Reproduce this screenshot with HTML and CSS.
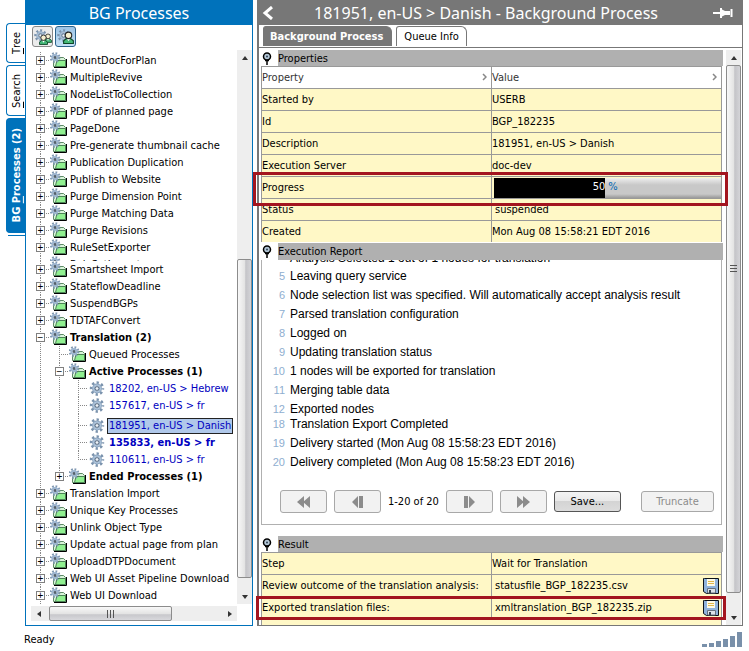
FILE: index.html
```html
<!DOCTYPE html>
<html lang="en">
<head>
    <meta charset="UTF-8">
    <meta name="viewport" content="width=device-width, initial-scale=1.0">
    <title>BG Processes</title>
    <link rel="stylesheet" href="styles.css">
</head>
<body>

    <!-- Icon sprite -->
    <svg class="sprite" aria-hidden="true">
        <symbol id="gear" viewBox="0 0 16 16">
            <circle cx="8" cy="8" r="6.2" fill="none" stroke="#7b93ad" stroke-width="3" stroke-dasharray="2.43 2.44" stroke-dashoffset="1.2"/>
            <circle cx="8" cy="8" r="3.8" fill="none" stroke="#8da6c0" stroke-width="3"/>
            <circle cx="8" cy="8" r="3.8" fill="none" stroke="#b9cde2" stroke-width="1"/>
            <circle cx="8" cy="8" r="2" fill="#eef3f8" stroke="#56697e" stroke-width="1"/>
        </symbol>
        <symbol id="folder" viewBox="0 0 17 17">
            <path d="M4 15.500H16.500V7" fill="none" stroke="#000" stroke-width="1"/>
            <path d="M3.500 14.500V7.500L9.500 5.500H13.500L15.500 7.500V14.500Z" fill="#d9f5d9" stroke="#5e8a66"/>
            <path d="M7 8.500H15.500V14.500H5.500Z" fill="#90f090" stroke="#4d8257"/>
            <circle cx="5" cy="5.500" r="4.200" fill="none" stroke="#8098b2" stroke-width="2.400" stroke-dasharray="1.65 1.65"/>
            <circle cx="5" cy="5.500" r="2.600" fill="none" stroke="#9db5d0" stroke-width="2"/>
            <circle cx="5" cy="5.500" r="1.400" fill="#52606e"/>
        </symbol>
        <symbol id="pin" viewBox="0 0 10 13">
            <circle cx="5" cy="4.500" r="3.500" fill="#b5c8d8" stroke="#000" stroke-width="1.500"/>
            <circle cx="5" cy="4.500" r="1" fill="#345"/>
            <path d="M5 8V13M3 8.500H7" stroke="#000" stroke-width="1.500"/>
        </symbol>
        <symbol id="disk" viewBox="0 0 16 16">
            <path d="M1.500 0.500H15.500V15.500H3.500L0.500 13.500V0.500Z" fill="#8fb3dc" stroke="#0c1218"/>
            <path d="M4 1H12V8H4Z" fill="#fdfbe8"/>
            <path d="M5 3.500H11M5 5.500H11" stroke="#e0b84c"/>
            <path d="M4.500 10.500H12.500V15H4.500Z" fill="#dde3e8" stroke="#66727e"/>
            <path d="M6 12H8V15H6Z" fill="#35424f"/>
        </symbol>
        <symbol id="person" viewBox="0 0 10 12">
            <path d="M0.500 11.500V9L3 7H7L9.500 9V11.500Z" fill="#45b878" stroke="#0c4526"/>
            <path d="M3.500 7L5 9.500L6.500 7Z" fill="#fff"/>
            <circle cx="5" cy="4" r="3" fill="#f6efcf" stroke="#222"/>
        </symbol>
    </svg>

    <div class="app">
        <div class="workspace">

            <nav class="side-tabs">
                <button class="side-tab"><span><u>T</u>ree</span></button>
                <button class="side-tab side-tab-search"><span><u>S</u>earch</span></button>
                <button class="side-tab side-tab-active"><span>BG <u>P</u>rocesses (2)</span></button>
                <div class="side-tabs-end"></div>
            </nav>

            <!-- Process tree -->
            <aside class="tree-panel">
                <h1 class="panel-title">BG Processes</h1>
                <div class="toolbar">
                    <button class="tool" aria-label="All users">
                        <svg width="18" height="18" viewBox="0 0 18 18"><use href="#gear" x="0" y="1" width="13" height="13"/><use href="#person" x="10" y="5" width="8" height="10"/><use href="#person" x="5" y="6" width="9" height="11"/></svg>
                    </button>
                    <button class="tool tool-on" aria-label="Current user">
                        <svg width="18" height="18" viewBox="0 0 18 18"><use href="#gear" x="0" y="1" width="13" height="13"/><use href="#person" x="6" y="3" width="11" height="13"/></svg>
                    </button>
                </div>

                <div class="tree-view">
                    <div class="tree-main">
                        <ul class="tree">
                            <li><div class="row"><button class="expander">+</button><svg class="icon"><use href="#folder"/></svg><span class="label">MountDocForPlan</span></div></li>
                            <li><div class="row"><button class="expander">+</button><svg class="icon"><use href="#folder"/></svg><span class="label">MultipleRevive</span></div></li>
                            <li><div class="row"><button class="expander">+</button><svg class="icon"><use href="#folder"/></svg><span class="label">NodeListToCollection</span></div></li>
                            <li><div class="row"><button class="expander">+</button><svg class="icon"><use href="#folder"/></svg><span class="label">PDF of planned page</span></div></li>
                            <li><div class="row"><button class="expander">+</button><svg class="icon"><use href="#folder"/></svg><span class="label">PageDone</span></div></li>
                            <li><div class="row"><button class="expander">+</button><svg class="icon"><use href="#folder"/></svg><span class="label">Pre-generate thumbnail cache</span></div></li>
                            <li><div class="row"><button class="expander">+</button><svg class="icon"><use href="#folder"/></svg><span class="label">Publication Duplication</span></div></li>
                            <li><div class="row"><button class="expander">+</button><svg class="icon"><use href="#folder"/></svg><span class="label">Publish to Website</span></div></li>
                            <li><div class="row"><button class="expander">+</button><svg class="icon"><use href="#folder"/></svg><span class="label">Purge Dimension Point</span></div></li>
                            <li><div class="row"><button class="expander">+</button><svg class="icon"><use href="#folder"/></svg><span class="label">Purge Matching Data</span></div></li>
                            <li><div class="row"><button class="expander">+</button><svg class="icon"><use href="#folder"/></svg><span class="label">Purge Revisions</span></div></li>
                            <li><div class="row"><button class="expander">+</button><svg class="icon"><use href="#folder"/></svg><span class="label">RuleSetExporter</span></div></li>
                            <li class="clipped"><div class="row"><span class="expander-space"></span><svg class="icon"><use href="#folder"/></svg><span class="label">RuleSetImporter</span></div></li>
                            <li><div class="row"><button class="expander">+</button><svg class="icon"><use href="#folder"/></svg><span class="label">Smartsheet Import</span></div></li>
                            <li><div class="row"><button class="expander">+</button><svg class="icon"><use href="#folder"/></svg><span class="label">StateflowDeadline</span></div></li>
                            <li><div class="row"><button class="expander">+</button><svg class="icon"><use href="#folder"/></svg><span class="label">SuspendBGPs</span></div></li>
                            <li><div class="row"><button class="expander">+</button><svg class="icon"><use href="#folder"/></svg><span class="label">TDTAFConvert</span></div></li>
                            <li>
                                <div class="row"><button class="expander">−</button><svg class="icon"><use href="#folder"/></svg><b class="label">Translation (2)</b></div>
                                <ul>
                                    <li><div class="row"><span class="expander-space"></span><svg class="icon"><use href="#folder"/></svg><span class="label">Queued Processes</span></div></li>
                                    <li>
                                        <div class="row"><button class="expander">−</button><svg class="icon"><use href="#folder"/></svg><b class="label">Active Processes (1)</b></div>
                                        <ul class="jobs">
                                            <li><div class="row"><span class="expander-space"></span><svg class="icon"><use href="#gear"/></svg><a class="label" href="#">18202, en-US &gt; Hebrew</a></div></li>
                                            <li><div class="row"><span class="expander-space"></span><svg class="icon"><use href="#gear"/></svg><a class="label" href="#">157617, en-US &gt; fr</a></div></li>
                                            <li class="selected"><div class="row"><span class="expander-space"></span><svg class="icon"><use href="#gear"/></svg><a class="label" href="#">181951, en-US &gt; Danish</a></div></li>
                                            <li><div class="row"><span class="expander-space"></span><svg class="icon"><use href="#gear"/></svg><a class="label" href="#"><b>135833, en-US &gt; fr</b></a></div></li>
                                            <li><div class="row"><span class="expander-space"></span><svg class="icon"><use href="#gear"/></svg><a class="label" href="#">110611, en-US &gt; fr</a></div></li>
                                        </ul>
                                    </li>
                                    <li><div class="row"><button class="expander">+</button><svg class="icon"><use href="#folder"/></svg><b class="label">Ended Processes (1)</b></div></li>
                                </ul>
                            </li>
                            <li><div class="row"><button class="expander">+</button><svg class="icon"><use href="#folder"/></svg><span class="label">Translation Import</span></div></li>
                            <li><div class="row"><button class="expander">+</button><svg class="icon"><use href="#folder"/></svg><span class="label">Unique Key Processes</span></div></li>
                            <li><div class="row"><button class="expander">+</button><svg class="icon"><use href="#folder"/></svg><span class="label">Unlink Object Type</span></div></li>
                            <li><div class="row"><button class="expander">+</button><svg class="icon"><use href="#folder"/></svg><span class="label">Update actual page from plan</span></div></li>
                            <li><div class="row"><button class="expander">+</button><svg class="icon"><use href="#folder"/></svg><span class="label">UploadDTPDocument</span></div></li>
                            <li><div class="row"><button class="expander">+</button><svg class="icon"><use href="#folder"/></svg><span class="label">Web UI Asset Pipeline Download</span></div></li>
                            <li><div class="row"><button class="expander">+</button><svg class="icon"><use href="#folder"/></svg><span class="label">Web UI Download</span></div></li>
                        </ul>
                        <div class="scroll-x">
                            <button class="arrow" aria-label="Scroll left"><svg width="4" height="6"><path d="M4 0V6L0 3Z" fill="#333"/></svg></button>
                            <div class="thumb"></div>
                            <div class="track"></div>
                            <button class="arrow" aria-label="Scroll right"><svg width="4" height="6"><path d="M0 0V6L4 3Z" fill="#333"/></svg></button>
                        </div>
                    </div>
                    <div class="scroll-y">
                        <button class="arrow" aria-label="Scroll up"><svg width="6" height="4"><path d="M0 4H6L3 0Z" fill="#333"/></svg></button>
                        <div class="track track-top"></div>
                        <div class="thumb thumb-tree"></div>
                        <div class="track track-bottom"></div>
                        <button class="arrow" aria-label="Scroll down"><svg width="6" height="4"><path d="M0 0H6L3 4Z" fill="#333"/></svg></button>
                    </div>
                </div>
            </aside>

            <!-- Process details -->
            <main class="detail-panel">
                <header class="detail-title">
                    <button aria-label="Back"><svg width="11" height="14"><path d="M10 1L3 7L10 13" fill="none" stroke="#fff" stroke-width="3"/></svg></button>
                    <h2>181951, en-US &gt; Danish - Background Process</h2>
                    <button aria-label="Pin"><svg width="20" height="12"><path d="M0 6H7M8 1V11M18.500 2V10" stroke="#fff" stroke-width="2"/><path d="M8 2L12 4V8L8 10Z" fill="#fff"/><path d="M11 4H17V8H11Z" fill="#fff"/></svg></button>
                </header>
                <div class="tabs">
                    <button class="tab tab-active">Background Process</button>
                    <button class="tab">Queue Info</button>
                </div>

                <div class="detail-view">
                    <div class="detail-main">
                        <h3 class="section-title"><svg><use href="#pin"/></svg><span>Properties</span></h3>
                        <table class="grid">
                            <thead>
                                <tr>
                                    <th><span>Property</span><svg width="5" height="8"><path d="M1 1L4 4L1 7" fill="none" stroke="#888" stroke-width="1.500"/></svg></th>
                                    <th><span>Value</span><svg width="5" height="8"><path d="M1 1L4 4L1 7" fill="none" stroke="#888" stroke-width="1.500"/></svg></th>
                                </tr>
                            </thead>
                            <tbody>
                                <tr><td>Started by</td><td>USERB</td></tr>
                                <tr><td>Id</td><td>BGP_182235</td></tr>
                                <tr><td>Description</td><td>181951, en-US &gt; Danish</td></tr>
                                <tr><td>Execution Server</td><td>doc-dev</td></tr>
                                <tr>
                                    <td class="highlight highlight-progress">Progress</td>
                                    <td>
                                        <div class="progress" role="progressbar" aria-valuenow="50" aria-label="Progress">
                                            <div class="progress-fill" style="width: 49%">50</div>
                                            <span>%</span>
                                        </div>
                                    </td>
                                </tr>
                                <tr><td>Status</td><td class="inset">suspended</td></tr>
                                <tr><td>Created</td><td>Mon Aug 08 15:58:21 EDT 2016</td></tr>
                            </tbody>
                        </table>

                        <h3 class="section-title section-report"><svg><use href="#pin"/></svg><span>Execution Report</span></h3>
                        <section class="report">
                            <ol>
                                <li class="cut-top"><span></span>Analysis Selected 1 out of 1 nodes for translation</li>
                                <li><span>5</span>Leaving query service</li>
                                <li><span>6</span>Node selection list was specified. Will automatically accept analysis result</li>
                                <li><span>7</span>Parsed translation configuration</li>
                                <li><span>8</span>Logged on</li>
                                <li><span>9</span>Updating translation status</li>
                                <li><span>10</span>1 nodes will be exported for translation</li>
                                <li><span>11</span>Merging table data</li>
                                <li><span>12</span>Exported nodes</li>
                                <li class="tight"><span>18</span>Translation Export Completed</li>
                                <li><span>19</span>Delivery started (Mon Aug 08 15:58:23 EDT 2016)</li>
                                <li><span>20</span>Delivery completed (Mon Aug 08 15:58:23 EDT 2016)</li>
                            </ol>
                            <div class="pager">
                                <button class="btn" disabled aria-label="First page"><svg width="14" height="12"><path d="M7 0V12L0 6ZM13 0V12L6 6Z"/></svg></button>
                                <button class="btn" disabled aria-label="Previous page"><svg width="14" height="12"><path d="M7 0V12L1 6ZM8 0H12V12H8Z"/></svg></button>
                                <span>1-20 of 20</span>
                                <button class="btn" disabled aria-label="Next page"><svg width="14" height="12"><path d="M2 0H6V12H2ZM7 0V12L13 6Z"/></svg></button>
                                <button class="btn" disabled aria-label="Last page"><svg width="14" height="12"><path d="M1 0V12L8 6ZM7 0V12L14 6Z"/></svg></button>
                                <button class="btn btn-save">Save...</button>
                                <button class="btn btn-truncate" disabled>Truncate</button>
                            </div>
                        </section>

                        <h3 class="section-title section-result"><svg><use href="#pin"/></svg><span>Result</span></h3>
                        <table class="grid">
                            <tbody>
                                <tr><td>Step</td><td>Wait for Translation</td></tr>
                                <tr><td>Review outcome of the translation analysis:</td><td class="inset"><div class="file"><span>statusfile_BGP_182235.csv</span><button aria-label="Save status file"><svg><use href="#disk"/></svg></button></div></td></tr>
                                <tr><td class="highlight highlight-files">Exported translation files:</td><td class="inset"><div class="file"><span>xmltranslation_BGP_182235.zip</span><button aria-label="Save translation files"><svg><use href="#disk"/></svg></button></div></td></tr>
                            </tbody>
                        </table>
                        <div class="grid-rest"></div>
                    </div>
                    <div class="scroll-y">
                        <button class="arrow" aria-label="Scroll up"><svg width="6" height="4"><path d="M0 4H6L3 0Z" fill="#333"/></svg></button>
                        <div class="thumb thumb-detail"></div>
                        <div class="track track-detail"></div>
                        <button class="arrow" aria-label="Scroll down"><svg width="6" height="4"><path d="M0 0H6L3 4Z" fill="#333"/></svg></button>
                    </div>
                </div>
            </main>
        </div>

        <footer class="status-bar">
            <span>Ready</span>
            <svg width="41" height="15"><path d="M0 12H5V15H0ZM7 11H12V15H7ZM14 9H19V15H14ZM21 7H26V15H21ZM28 4H33V15H28ZM35 0H40V15H35Z" fill="#7990aa"/></svg>
        </footer>
    </div>

</body>
</html>
```
FILE: styles.css
```css
/* --- Global Styles & Theme --- */
:root {
    --blue: #0072bb;
    --gray: #777777;
    --section: #b0b0b0;
    --line: #999999;
    --cell: #fff8c6;
    --red: #a3151f;
    --link: #0000c0;
}

* {
    box-sizing: border-box;
    margin: 0;
    padding: 0;
}

body {
    font-family: "DejaVu Sans Condensed", "Noto Sans", sans-serif;
    font-size: 11px;
    line-height: 17px;
    color: #000;
    background: #fff;
}

button {
    font: inherit;
    color: inherit;
    background: none;
    border: none;
}

ul,
ol {
    list-style: none;
}

svg {
    display: block;
    flex: none;
}

.sprite {
    position: absolute;
    width: 0;
    height: 0;
}

.app {
    display: flex;
    flex-direction: column;
    min-height: 100vh;
    padding: 0 6px;
}

.workspace {
    display: flex;
}

/* --- Side Tabs --- */
.side-tabs {
    display: flex;
    flex-direction: column;
    gap: 2px;
    width: 19px;
    padding-top: 23px;
}

.side-tab {
    display: flex;
    align-items: center;
    justify-content: center;
    height: 40px;
    border: 1px solid var(--blue);
    border-right: none;
    border-radius: 4px 0 0 4px;
}

.side-tab span {
    writing-mode: vertical-rl;
    transform: rotate(180deg);
    white-space: nowrap;
}

.side-tab-search {
    height: 51px;
}

.side-tab-active {
    height: 115px;
    color: #fff;
    font-weight: bold;
    background: var(--blue);
}

.side-tabs-end {
    height: 1px;
    margin-left: 2px;
    background: var(--blue);
}

/* --- Tree Panel --- */
.tree-panel {
    display: flex;
    flex-direction: column;
    flex: none;
    width: 228px;
    margin-right: 4px;
    border: 1px solid var(--blue);
    border-top: none;
}

.panel-title,
.detail-title h2 {
    font-family: "Noto Sans", sans-serif;
    font-size: 16px;
    font-weight: normal;
    line-height: 26px;
    text-align: center;
    white-space: nowrap;
}

.panel-title {
    height: 25px;
    color: #fff;
    background: var(--blue);
}

.toolbar {
    display: flex;
    gap: 2px;
    height: 25px;
    padding: 1px 6px;
}

.tool {
    display: flex;
    align-items: center;
    justify-content: center;
    width: 21px;
    height: 21px;
    border: 1px solid #888;
    border-radius: 3px;
    background: #ececec;
}

.tool-on {
    border-color: #2c628b;
    background: linear-gradient(#9cc4e6, #c4e0f6);
}

.tree-view {
    display: flex;
    flex: 1;
    padding-bottom: 4px;
}

.tree-main {
    display: flex;
    flex-direction: column;
    flex: 1;
    padding-left: 5px;
}

.tree {
    padding-top: 2px;
    flex: 1;
}

.tree ul {
    padding-left: 19px;
}

.tree li {
    background: repeating-linear-gradient(#888 0 1px, transparent 1px 2px) 9px 0 / 1px 100% no-repeat;
}

.tree ul > li:last-child {
    background-size: 1px 9px;
}

.tree .clipped {
    height: 5px;
    overflow: hidden;
}

.row {
    display: flex;
    align-items: center;
    height: 17px;
    white-space: nowrap;
    background: repeating-linear-gradient(to right, #888 0 1px, transparent 1px 2px) 9px 8px / 10px 1px no-repeat;
}

.expander {
    display: flex;
    align-items: center;
    justify-content: center;
    width: 9px;
    height: 9px;
    margin: 0 5px;
    border: 1px solid #808080;
    font-family: "Liberation Sans", sans-serif;
    font-size: 10px;
    line-height: 7px;
    background: #fff;
}

.expander-space {
    width: 19px;
}

.icon {
    width: 17px;
    height: 17px;
}

.label {
    padding: 0 1px 0 3px;
    color: #000;
    text-decoration: none;
}

.jobs .icon {
    width: 18px;
    height: 15px;
}

.jobs .label {
    margin-left: 1px;
    border: 1px solid transparent;
    padding: 0 1px;
    line-height: 14px;
    color: var(--link);
}

.jobs .selected {
    padding-top: 3px;
}

.jobs .selected .label {
    border-color: #222;
    background: #b0c8ea;
}

/* --- Scrollbars --- */
.scroll-y {
    display: flex;
    flex-direction: column;
    flex: none;
    width: 15px;
    background: #eee;
}

.tree-view .scroll-y {
    margin-bottom: 17px;
}

.scroll-x {
    display: flex;
    height: 15px;
    margin-top: 1px;
    background: #eee;
}

.arrow {
    display: flex;
    align-items: center;
    justify-content: center;
    flex: none;
    width: 15px;
    height: 15px;
}

.thumb {
    display: flex;
    align-items: center;
    justify-content: center;
    border: 1px solid #8c8c8c;
    border-radius: 2px;
    background: linear-gradient(to right, #f8f8f8, #e4e4e4 50%, #c4c4c8 60%, #d4d4d8);
}

.thumb::after {
    content: "";
    width: 7px;
    height: 8px;
    background: repeating-linear-gradient(#555 0 1px, transparent 1px 3px);
}

.scroll-x .thumb {
    flex: 122;
    margin-left: 3px;
    background: linear-gradient(#f8f8f8, #e4e4e4 50%, #c8c8cc 60%, #d8d8dc);
}

.scroll-x .thumb::after {
    background: repeating-linear-gradient(to right, #555 0 1px, transparent 1px 3px);
}

.scroll-x .track {
    flex: 50;
}

.track-top {
    flex: 194;
}

.thumb-tree {
    flex: 317;
}

.thumb-tree::after {
    content: none;
}

.track-bottom {
    flex: 11;
}

/* The grip of the long thumb sits above its middle */
.thumb-detail {
    flex: 522;
    padding-bottom: 120px;
}

.track-detail {
    flex: 22;
}

/* --- Detail Panel --- */
.detail-panel {
    display: flex;
    flex-direction: column;
    flex: 1;
    min-width: 0;
    border: solid var(--gray);
    border-width: 0 1px 1px 2px;
}

.detail-title {
    display: flex;
    align-items: center;
    height: 25px;
    padding: 0 9px 0 3px;
    color: #fff;
    background: var(--gray);
}

.detail-title h2 {
    flex: 1;
    padding-right: 14px;
}

.tabs {
    display: flex;
    align-items: flex-start;
    gap: 4px;
    height: 23px;
    padding: 1px 4px;
    border-bottom: 1px solid var(--gray);
}

.tab {
    height: 20px;
    padding: 0 7px;
    border: 1px solid var(--gray);
    border-bottom: none;
    border-radius: 3px 6px 0 0;
}

.tab-active {
    padding: 0 8px 0 6px;
    font-weight: bold;
    color: #fff;
    background: var(--gray);
}

.detail-view {
    display: flex;
    flex: 1;
    gap: 3px;
    padding: 2px 1px 0 2px;
}

.detail-main {
    display: flex;
    flex-direction: column;
    flex: 1;
    min-width: 0;
}

.section-title {
    display: flex;
    height: 16px;
    font-size: 11px;
    font-weight: normal;
    line-height: 17px;
}

.section-title svg {
    width: 10px;
    height: 13px;
    margin: 2px 6px 0 1px;
}

.section-title span {
    flex: 1;
    background: var(--section);
}

.section-report {
    height: 17px;
    margin-top: 1px;
}

.section-result {
    margin-top: 11px;
}

/* --- Tables --- */
.grid {
    width: calc(100% - 1px);
    table-layout: fixed;
    border-collapse: separate;
    border-spacing: 0;
    border-right: 1px solid var(--line);
}

.grid td,
.grid th {
    height: 22px;
    border-top: 1px solid var(--line);
    border-left: 1px solid var(--line);
    font-weight: normal;
    text-align: left;
    white-space: nowrap;
    background: var(--cell);
}

.grid th {
    color: #333;
    background: #fff;
}

.grid th span {
    float: left;
}

.grid th svg {
    float: right;
    margin: 4px 4px 0 0;
}

.grid .inset {
    padding-left: 3px;
}

.grid-rest {
    flex: 1;
    min-height: 7px;
    margin-right: 1px;
    border: 1px solid var(--line);
    border-bottom: none;
    background: var(--cell);
}

.file {
    display: flex;
    align-items: center;
    justify-content: space-between;
    padding-right: 2px;
}

.file svg {
    width: 16px;
    height: 16px;
}

.progress {
    display: flex;
    height: 20px;
    margin-left: 2px;
    line-height: 18px;
    color: #0068b5;
    background: linear-gradient(#eee, #c8c8c8 35%, #c8c8c8 80%, #999);
}

.progress-fill {
    color: #fff;
    text-align: right;
    background: #000;
}

.progress span {
    padding-left: 3px;
}

/* --- Red call-outs, anchored to the first cell and as wide as both --- */
.highlight {
    position: relative;
}

.highlight::after {
    content: "";
    position: absolute;
    z-index: 1;
    border: 3px solid var(--red);
}

.highlight-progress::after {
    inset: -5px auto -8px -9px;
    width: calc(200% + 11px);
}

.highlight-files::after {
    inset: -1px auto -2px -6px;
    width: calc(200% + 6px);
}

/* --- Execution Report --- */
.report {
    margin-right: 1px;
    border: 1px solid var(--section);
    border-top: none;
}

.report li {
    display: flex;
    height: 19px;
    font-family: "Liberation Sans", sans-serif;
    font-size: 12px;
    line-height: 20px;
    white-space: nowrap;
}

.report li span {
    width: 23px;
    margin-right: 5px;
    font-size: 11px;
    text-align: right;
    color: #8eaed0;
}

.report .cut-top {
    align-items: flex-end;
    height: 6px;
    line-height: 16px;
    overflow: hidden;
}

.report .tight {
    height: 15px;
    line-height: 12px;
}

.pager {
    display: flex;
    align-items: center;
    gap: 7px;
    padding: 19px 7px 11px 18px;
}

.btn {
    display: flex;
    align-items: center;
    justify-content: center;
    width: 47px;
    height: 23px;
    border: 1px solid #a8a8a8;
    border-radius: 3px;
    background: #f2f2f2;
    fill: #8c8c8c;
}

.btn:disabled {
    color: #8c8c8c;
}

.btn-save {
    width: 67px;
    height: 21px;
    border-color: #555;
    background: linear-gradient(#f4f4f4, #e8e8e8 50%, #d4d4d4 50%, #dcdcdc);
}

.btn-truncate {
    width: 73px;
    height: 21px;
    margin-left: auto;
}

/* --- Status Bar --- */
.status-bar {
    display: flex;
    align-items: center;
    justify-content: space-between;
    flex: 1;
    min-height: 26px;
    padding-left: 18px;
}
```
